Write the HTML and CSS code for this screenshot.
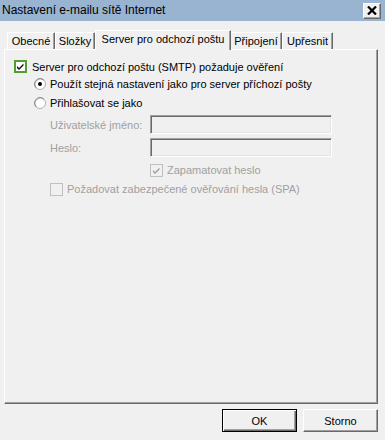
FILE: index.html
```html
<!DOCTYPE html>
<html lang="cs">
<head>
<meta charset="utf-8">
<title>Nastavení e-mailu sítě Internet</title>
<link rel="stylesheet" href="styles.css">
</head>
<body>
<div class="dialog">
  <div class="titlebar">
    <span class="title">Nastavení e-mailu sítě Internet</span>
    <button class="close" type="button" aria-label="Zavřít">
      <svg width="10" height="9" viewBox="0 0 10 9"><path d="M1 0.5 L9 8.5 M9 0.5 L1 8.5" stroke="#000" stroke-width="2.2" fill="none"/></svg>
    </button>
  </div>

  <div class="tabs">
    <div class="tab t-obecne">Obecné</div>
    <div class="tab t-slozky">Složky</div>
    <div class="tab selected">Server pro odchozí poštu</div>
    <div class="tab t-pripojeni">Připojení</div>
    <div class="tab t-upresnit">Upřesnit</div>
  </div>

  <div class="panel">
    <div class="row r1">
      <svg class="box" width="13" height="13" viewBox="0 0 13 13">
        <rect x="0" y="0" width="13" height="13" fill="#4f9e2f"/>
        <rect x="2" y="2" width="9" height="9" fill="#fff"/>
        <path d="M3 6 L5 8 L9.5 3.5 L9.5 5.5 L5 10 L3 8 Z" fill="#111"/>
      </svg>
      <span>Server pro odchozí poštu (SMTP) požaduje ověření</span>
    </div>
    <div class="row r2 indent1">
      <svg class="radio" width="12" height="12" viewBox="0 0 12 12">
        <circle cx="6" cy="6" r="5.5" fill="#fff" stroke="#b0b0b0"/>
        <path d="M2.2 9.8 A5.4 5.4 0 0 1 9.8 2.2" stroke="#808080" fill="none"/>
        <circle cx="6" cy="6" r="2" fill="#000"/>
      </svg>
      <span>Použít stejná nastavení jako pro server příchozí pošty</span>
    </div>
    <div class="row r3 indent1">
      <svg class="radio" width="12" height="12" viewBox="0 0 12 12">
        <circle cx="6" cy="6" r="5.5" fill="#fff" stroke="#b0b0b0"/>
        <path d="M2.2 9.8 A5.4 5.4 0 0 1 9.8 2.2" stroke="#808080" fill="none"/>
      </svg>
      <span>Přihlašovat se jako</span>
    </div>
    <div class="field f1">
      <label class="flabel disabled">Uživatelské jméno:</label>
      <div class="input"></div>
    </div>
    <div class="field f2">
      <label class="flabel disabled">Heslo:</label>
      <div class="input"></div>
    </div>
    <div class="row r6 indent3 disabled">
      <svg class="box" width="13" height="13" viewBox="0 0 13 13">
        <rect x="0.5" y="0.5" width="12" height="12" fill="#f0f0f0" stroke="#c0c0c0"/>
        <path d="M3 6 L5 8 L9.5 3.5 L9.5 5.5 L5 10 L3 8 Z" fill="#a0a0a0"/>
      </svg>
      <span>Zapamatovat heslo</span>
    </div>
    <div class="row r7 indent2 disabled">
      <svg class="box" width="13" height="13" viewBox="0 0 13 13">
        <rect x="0.5" y="0.5" width="12" height="12" fill="#f0f0f0" stroke="#c0c0c0"/>
      </svg>
      <span>Požadovat zabezpečené ověřování hesla (SPA)</span>
    </div>
  </div>

  <div class="footer">
    <button class="btn default" type="button">OK</button>
    <button class="btn" type="button">Storno</button>
  </div>
</div>
</body>
</html>
```

FILE: styles.css
```css
html, body {
  margin: 0;
  padding: 0;
  background: #f0f0f0;
}
body {
  font-family: "Liberation Sans", Arial, sans-serif;
  font-size: 11px;
  color: #000;
}
.dialog {
  width: 385px;
  height: 440px;
  display: flex;
  flex-direction: column;
}
.titlebar {
  height: 21px;
  background: #99b4d1;
  display: flex;
  align-items: center;
  justify-content: space-between;
  padding: 0 4px 0 2px;
  box-sizing: border-box;
  font-size: 12px;
}
.title {
  line-height: 21px;
}
.close {
  width: 18px;
  height: 16px;
  margin: 0;
  padding: 0;
  background: #f0f0f0;
  border: 1px solid;
  border-color: #fff #696969 #696969 #fff;
  box-shadow: inset -1px -1px 0 #a0a0a0;
  display: flex;
  align-items: center;
  justify-content: center;
}
.tabs {
  display: flex;
  align-items: flex-end;
  margin-top: 8px;
  padding-left: 7px;
  height: 20px;
  position: relative;
  z-index: 1;
}
.tab {
  box-sizing: border-box;
  height: 17px;
  line-height: 17px;
  text-align: center;
  border-top: 1px solid #fff;
  border-left: 1px solid #fff;
  border-right: 1px solid #696969;
  box-shadow: inset -1px 0 0 #a0a0a0;
  border-radius: 1px 1px 0 0;
  background: #f0f0f0;
  white-space: nowrap;
}
.t-obecne { width: 48px; }
.t-slozky { width: 40px; }
.t-pripojeni { width: 52px; }
.t-upresnit { width: 51px; }
.tab.selected {
  width: 136px;
  height: 20px;
  line-height: 17px;
  margin: 0 -1px -1px 0;
  position: relative;
  z-index: 2;
}
.panel {
  margin: 0 7px 0 4px;
  height: 355px;
  box-sizing: border-box;
  border-top: 1px solid #fff;
  border-left: 1px solid #fff;
  border-right: 1px solid #696969;
  border-bottom: 1px solid #696969;
  box-shadow: inset -1px -1px 0 #a0a0a0;
  padding: 8px 0 0 9px;
  display: flex;
  flex-direction: column;
}
.row {
  display: flex;
  align-items: center;
  height: 17px;
  white-space: nowrap;
}
.row .box, .row .radio {
  flex: none;
}
.r1 .box { margin-right: 5px; }
.radio { margin-right: 4px; }
.r2 { margin-top: 0; }
.r3 { margin-top: 2px; }
.indent1 { padding-left: 20px; }
.indent2 { padding-left: 36px; }
.indent3 { padding-left: 136px; }
.r6 .box, .r7 .box { margin-right: 4px; }
.disabled { color: #a0a0a0; }
.field {
  display: flex;
  align-items: center;
  height: 19px;
  padding-left: 36px;
}
.f1 { margin-top: 4px; }
.f2 { margin-top: 4px; }
.flabel {
  width: 100px;
  flex: none;
}
.input {
  width: 182px;
  height: 19px;
  box-sizing: border-box;
  border: 1px solid;
  border-color: #a0a0a0 #fff #fff #a0a0a0;
  box-shadow: inset 1px 1px 0 #696969, inset -1px -1px 0 #e3e3e3;
  background: #f0f0f0;
}
.r6 { margin-top: 5px; height: 16px; }
.r7 { margin-top: 3px; height: 16px; }
.footer {
  display: flex;
  justify-content: flex-end;
  gap: 6px;
  padding: 5px 7px 0 0;
}
.btn {
  width: 75px;
  height: 23px;
  margin: 0;
  padding: 0;
  font-family: "Liberation Sans", Arial, sans-serif;
  font-size: 11px;
  color: #000;
  background: #f0f0f0;
  border: 1px solid;
  border-color: #fff #696969 #696969 #fff;
  box-shadow: inset -1px -1px 0 #a0a0a0;
}
.btn.default {
  border-color: #000;
  box-shadow: inset 1px 1px 0 #fff, inset -1px -1px 0 #696969, inset -2px -2px 0 #a0a0a0;
}
```
